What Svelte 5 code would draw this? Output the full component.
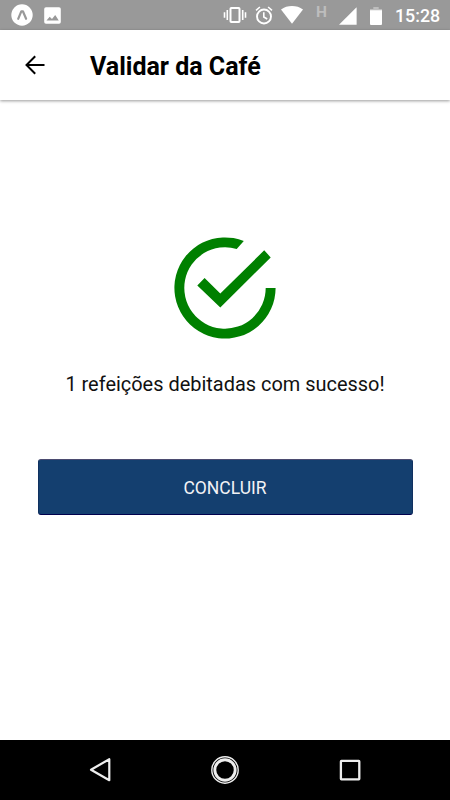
<script>
	let time = '15:28';
	let title = 'Validar da Café';
	let amount = 1;
</script>

<div class="screen">
	<div class="status">
		<svg class="expo" width="22" height="22" viewBox="0 0 22 22">
			<circle cx="11" cy="11" r="10.7" fill="#fff" />
			<path d="M7.2 14.8 10.3 7.3h1.6l3.2 7.5" fill="none" stroke="#999" stroke-width="2.2" stroke-linejoin="round" stroke-linecap="round" />
		</svg>
		<svg class="photo" width="17" height="17" viewBox="0 0 17 17">
			<rect x="0.2" y="0.2" width="16.6" height="16.6" rx="1.8" fill="#fff" />
			<path d="M2.5 13.6 5.7 9.7 8 12.1 11.2 8 14.8 13.6z" fill="#999" />
		</svg>
		<svg class="vibrate" width="24" height="18" viewBox="0 0 24 18">
			<rect x="7.5" y="2" width="9" height="14" rx="0.8" fill="none" stroke="#fff" stroke-width="2" />
			<path d="M4.3 4v10M1.5 6.2v5.6M19.7 4v10M22.5 6.2v5.6" stroke="#fff" stroke-width="1.6" />
		</svg>
		<svg class="alarm" width="18" height="19" viewBox="0 0 18 19">
			<circle cx="9" cy="10.5" r="7" fill="none" stroke="#fff" stroke-width="1.9" />
			<path d="M1 4.3 4.9 1M17 4.3 13.1 1M8.8 6.3V11l3.4 2" fill="none" stroke="#fff" stroke-width="1.6" />
		</svg>
		<svg class="wifi" width="22" height="18" viewBox="0 0 22 18">
			<path d="M0 3.5C6.2-1.1 15.8-1.1 22 3.5L11 17.7z" fill="#fff" />
		</svg>
		<span class="net">H</span>
		<svg class="signal" width="18" height="18" viewBox="0 0 18 18">
			<path d="M17.6 0.2v17.6H0z" fill="#fff" />
		</svg>
		<svg class="battery" width="12" height="19" viewBox="0 0 12 19">
			<path d="M3.3 0h5.4v1.9H12V4H0V1.9h3.3z" fill="#bdbdbd" />
			<path d="M0 3.3h12V17a1 1 0 0 1-1 1H1a1 1 0 0 1-1-1z" fill="#fff" />
		</svg>
		<span class="time">{time}</span>
	</div>

	<header>
		<svg width="20" height="20" viewBox="0 0 20 20">
			<path d="M19.5 10H1.7M10.2 1.2 1.5 10l8.7 8.8" fill="none" stroke="#000" stroke-width="2" />
		</svg>
		<h1>{title}</h1>
	</header>

	<main>
		<svg class="check" width="102" height="102" viewBox="-51 -51 102 102">
			<path d="M18.8-47A50.6 50.6 0 1 0 50.6 0H40.7A40.7 40.7 0 1 1 11.7-39z" fill="#008000" />
			<path d="M-20.4-10-4.7 5.6 39.2-37.7l6.5 7.1-50.4 50.2-23-22z" fill="#008000" />
		</svg>
		<p>{amount} refeições debitadas com sucesso!</p>
		<button>CONCLUIR</button>
	</main>

	<nav>
		<svg width="24" height="28" viewBox="0 0 24 28">
			<path d="M21.3 3.2v21L3 13.7z" fill="none" stroke="#eee" stroke-width="2.2" stroke-linejoin="round" />
		</svg>
		<svg width="28" height="28" viewBox="0 0 28 28">
			<circle cx="14" cy="14" r="13.2" fill="none" stroke="#eee" stroke-width="1.4" />
			<circle cx="14" cy="14" r="10.2" fill="none" stroke="#eee" stroke-width="2.9" />
		</svg>
		<svg width="24" height="28" viewBox="0 0 24 28">
			<rect x="2.9" y="4.9" width="18.4" height="18.4" rx="0.5" fill="none" stroke="#eee" stroke-width="2.3" />
		</svg>
	</nav>
</div>

<style>
	:global(body) {
		margin: 0;
		background: #fff;
	}

	.screen {
		display: flex;
		flex-direction: column;
		width: 450px;
		height: 800px;
		font-family: Roboto, sans-serif;
		overflow: hidden;
	}

	svg {
		display: block;
		flex: none;
	}

	.status {
		display: flex;
		align-items: center;
		height: 30px;
		padding-left: 11px;
		background: #999;
		color: #fff;
	}

	.photo {
		margin-left: 11px;
	}

	.vibrate {
		margin-left: 162px;
	}

	.alarm {
		margin-left: 8px;
	}

	.wifi {
		margin-left: 8px;
	}

	.net {
		width: 11px;
		margin: -6px 0 0 13px;
		font-size: 15.5px;
		font-weight: 700;
		line-height: 15px;
		color: #bdbdbd;
	}

	.signal {
		margin: 2px 0 0 12px;
	}

	.battery {
		margin: 2px 0 0 13px;
	}

	.time {
		margin: 1px 0 0 13px;
		font-size: 17.8px;
		font-weight: 500;
		line-height: 20px;
	}

	header {
		display: flex;
		align-items: center;
		height: 70px;
		padding-left: 25px;
		box-shadow: 0 1px 3px rgba(0, 0, 0, 0.4);
	}

	h1 {
		margin: 3px 0 0 45px;
		font-size: 25px;
		font-weight: 700;
		line-height: 30px;
		color: #000;
	}

	main {
		flex: 1;
		display: flex;
		flex-direction: column;
		align-items: center;
		padding-top: 137px;
	}

	p {
		margin: 32px 0 0;
		font-size: 19.95px;
		line-height: 26px;
		color: #111;
		white-space: nowrap;
	}

	button {
		width: 375px;
		height: 56px;
		margin-top: 62px;
		padding: 2px 0 0;
		border: 1px solid #10305f;
		border-top-color: #4b4b70;
		border-bottom-color: #00004d;
		border-radius: 3px;
		background: #143f6f;
		color: #f2f2f5;
		font-family: inherit;
		font-size: 17.5px;
	}

	nav {
		display: flex;
		justify-content: space-between;
		align-items: center;
		height: 60px;
		padding: 0 88px;
		background: #000;
	}
</style>
